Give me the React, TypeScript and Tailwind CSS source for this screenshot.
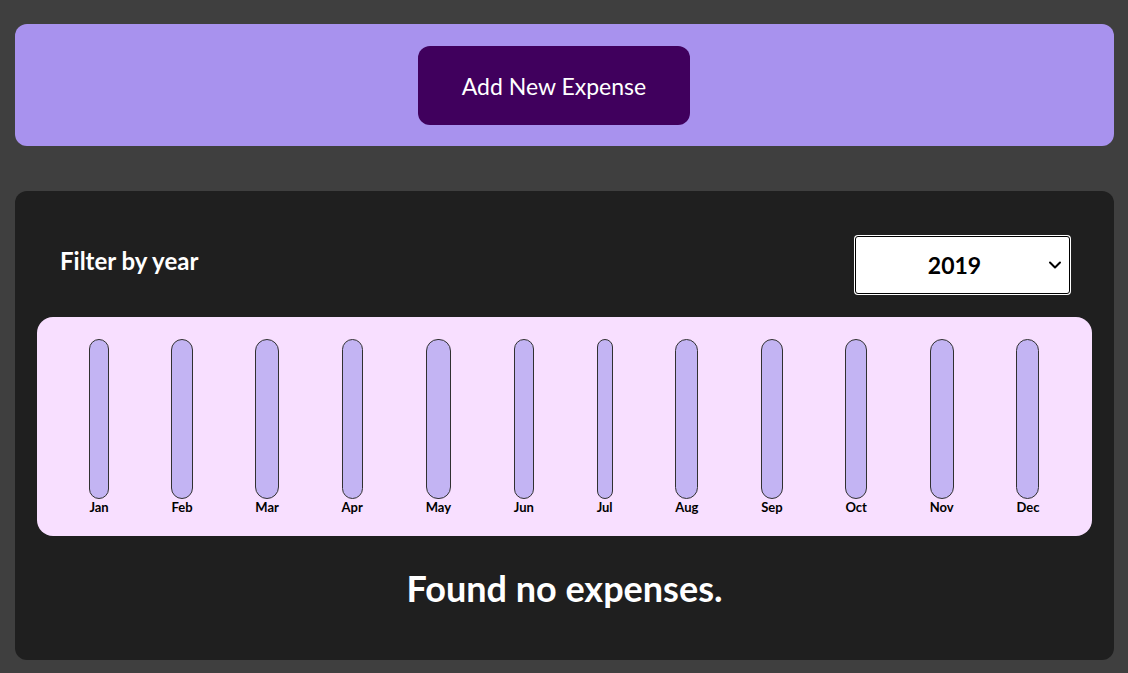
import React from "react";

const months = ["Jan","Feb","Mar","Apr","May","Jun","Jul","Aug","Sep","Oct","Nov","Dec"];

export default function App() {
  return (
    <div className="min-h-screen bg-[#3f3f3f] pl-[15px] pr-[14px] pt-[24px] pb-[14px]" style={{ fontFamily: "Lato, 'Noto Sans', sans-serif" }}>
      <div className="h-[122px] rounded-[12px] bg-[#a892ee] flex items-center justify-center pr-[21px]">
        <button className="w-[272px] h-[79px] rounded-[12px] bg-[#40005d] text-white text-[23px] font-normal pt-[2px]">
          Add New Expense
        </button>
      </div>
      <div className="mt-[45px] rounded-[12px] bg-[#1f1f1f] p-[22px] pb-[52px]">
        <div className="flex items-center justify-between pl-[23px] pr-[21px] pt-[22px] mb-[22px]">
          <span className="text-white font-bold text-[24px] leading-[30px] pb-[8px]">Filter by year</span>
          <div className="w-[217px] h-[60px] rounded-[4px] bg-white p-[1px]">
            <div className="relative w-full h-full rounded-[3px] border border-black bg-white flex items-center justify-center pr-[16px]">
              <span className="font-bold text-[23px] text-black">2019</span>
              <svg className="absolute right-[7px] top-1/2 -translate-y-1/2" width="14" height="14" viewBox="0 0 14 14" fill="none">
                <path d="M2 4.5l5 5 5-5" stroke="#000" strokeWidth="2" strokeLinecap="round" strokeLinejoin="round" />
              </svg>
            </div>
          </div>
        </div>
        <div className="h-[219px] rounded-[16px] bg-[#f8dfff] flex justify-around px-[21px] pt-[22px] pb-[21px]">
          {months.map((m) => (
            <div key={m} className="h-full flex flex-col items-center">
              <div className="flex-1 w-full rounded-[12px] border border-[#313131] bg-[#c3b4f3]" />
              <span className="text-[13px] leading-[16px] font-bold text-black">{m}</span>
            </div>
          ))}
        </div>
        <div className="mt-[32px] text-center text-white font-bold text-[36px] leading-[40px]">
          Found no expenses.
        </div>
      </div>
    </div>
  );
}
